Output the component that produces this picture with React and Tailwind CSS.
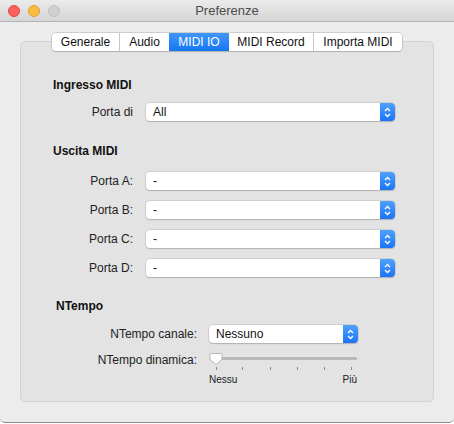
import React from "react";

const font = { fontFamily: '"Liberation Sans", Arial, sans-serif' };

function Stepper() {
  return (
    <div className="w-[15px] h-full rounded-r-[4px] bg-gradient-to-b from-[#4ea1fc] to-[#1a74f5] flex items-center justify-center">
      <svg width="7" height="11" viewBox="0 0 7 11" fill="none" stroke="white" strokeWidth="1.3">
        <path d="M1 4 L3.5 1.5 L6 4" />
        <path d="M1 7 L3.5 9.5 L6 7" />
      </svg>
    </div>
  );
}

function Select({ value, width }) {
  return (
    <div
      className={`${width} h-[18px] flex bg-white rounded-[4px] shadow-[0_0_0_0.5px_#b9b9b9,0_1px_1px_rgba(0,0,0,0.25)]`}
    >
      <div className="flex-1 pl-[7px] text-[12px] leading-[18px] text-[#111]">{value}</div>
      <Stepper />
    </div>
  );
}

function PortRow({ label, value }) {
  return (
    <div className="flex items-center h-[18px]">
      <div className="w-[80px] text-right text-[12px] text-[#222]">{label}</div>
      <div className="ml-[13px]">
        <Select value={value} width="w-[249px]" />
      </div>
    </div>
  );
}

const tabs = ["Generale", "Audio", "MIDI IO", "MIDI Record", "Importa MIDI"];
const tabWidths = ["w-[67px]", "w-[50px]", "w-[60px]", "w-[84px]", "w-[89px]"];

export default function App() {
  return (
    <div style={font} className="w-[454px] h-[424px] bg-white">
      <div className="w-[454px] h-[423px] bg-[#ececec] rounded-b-[5px] border-b border-[#8a8a8a] flex flex-col">
        <div className="h-[22px] bg-gradient-to-b from-[#ebebeb] to-[#d6d6d6] border-b border-[#b4b4b4] relative flex items-center justify-center">
          <div className="absolute left-[8px] top-[5px] flex gap-[8px]">
            <div className="w-[12px] h-[12px] rounded-full bg-[#fc605c] border border-[#de4a45]" />
            <div className="w-[12px] h-[12px] rounded-full bg-[#fdbc40] border border-[#de9f34]" />
            <div className="w-[12px] h-[12px] rounded-full bg-[#d0d0d0] border border-[#bdbdbd]" />
          </div>
          <div className="text-[13px] text-[#4b4b4b]">Preferenze</div>
        </div>

        <div className="flex justify-center mt-[11px] relative z-10">
          <div className="flex h-[18px] bg-white rounded-[4px] shadow-[0_0_0_0.5px_#b0b0b0,0_1px_1px_rgba(0,0,0,0.2)] overflow-hidden">
            {tabs.map((t, i) => (
              <div
                key={t}
                className={`${tabWidths[i]} flex items-center justify-center text-[12px] ${
                  i === 2
                    ? "bg-gradient-to-b from-[#3f97fb] to-[#1476f5] text-white"
                    : "text-[#111]"
                } ${i > 0 && i !== 2 && i !== 3 ? "border-l border-[#c8c8c8]" : ""} ${i === 4 ? "" : ""}`}
              >
                {t}
              </div>
            ))}
          </div>
        </div>

        <div className="mx-[20px] -mt-[10px] h-[361px] bg-[#e3e3e3] border border-[#d3d3d3] rounded-[5px] pl-[32px] pt-[35px]">
          <div className="text-[12px] font-bold text-[#111] h-[16px] leading-[16px]">Ingresso MIDI</div>
          <div className="mt-[10px]">
            <PortRow label="Porta di" value="All" />
          </div>

          <div className="mt-[22px] text-[12px] font-bold text-[#111] h-[16px] leading-[16px]">Uscita MIDI</div>
          <div className="mt-[13px] flex flex-col gap-[11px]">
            <PortRow label="Porta A:" value="-" />
            <PortRow label="Porta B:" value="-" />
            <PortRow label="Porta C:" value="-" />
            <PortRow label="Porta D:" value="-" />
          </div>

          <div className="mt-[21px] ml-[3px] text-[12px] font-bold text-[#111] h-[16px] leading-[16px]">NTempo</div>
          <div className="mt-[11px] flex items-center h-[18px]">
            <div className="w-[144px] text-right text-[12px] text-[#222]">NTempo canale:</div>
            <div className="ml-[12px]">
              <Select value="Nessuno" width="w-[149px]" />
            </div>
          </div>
          <div className="mt-[9px] flex">
            <div className="w-[144px] text-right text-[12px] text-[#222] leading-[16px]">NTempo dinamica:</div>
            <div className="ml-[12px] w-[149px] flex flex-col">
              <div className="relative h-[14px]">
                <div className="absolute left-[4px] right-[1px] top-[5px] h-[3px] rounded-full bg-[#b9b9b9]" />
                <svg className="absolute left-0 top-0" width="14" height="14" viewBox="0 0 14 14">
                  <path
                    d="M2 1.5 H12 Q13 1.5 13 2.5 V7.5 L7 12.5 L1 7.5 V2.5 Q1 1.5 2 1.5 Z"
                    fill="white"
                    stroke="#a9a9a9"
                    strokeWidth="0.8"
                  />
                </svg>
              </div>
              <div className="relative h-[4px] mt-[1px]">
                {[7, 33, 61, 88, 115, 142].map((x) => (
                  <div key={x} className="absolute top-0 w-px h-[3px] bg-[#888]" style={{ left: x }} />
                ))}
              </div>
              <div className="flex justify-between text-[10px] text-[#222] leading-[12px] mt-[3px]">
                <span>Nessu</span>
                <span className="pr-[1px]">Più</span>
              </div>
            </div>
          </div>
        </div>
      </div>
    </div>
  );
}
